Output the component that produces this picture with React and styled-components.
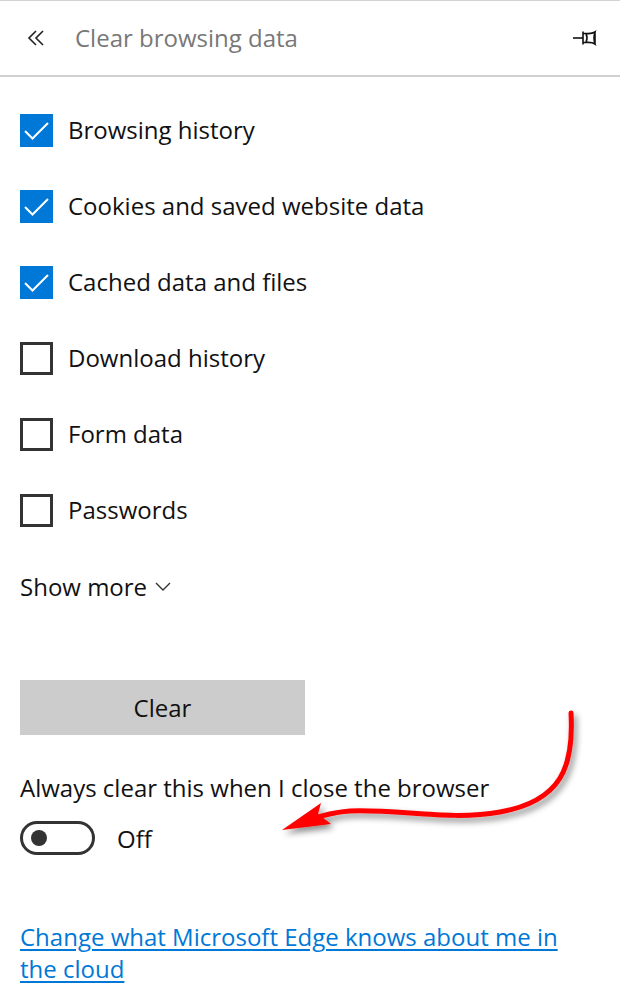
import styled, { createGlobalStyle } from 'styled-components'

const Global = createGlobalStyle`
html, body {
    margin: 0;
    padding: 0;
    background: #fff;
}
body {
    font-family: "Open Sans", "Noto Sans", sans-serif;
    color: #1a1a1a;
}
`

const items = [
    { label: 'Browsing history', on: true },
    { label: 'Cookies and saved website data', on: true },
    { label: 'Cached data and files', on: true },
    { label: 'Download history', on: false },
    { label: 'Form data', on: false },
    { label: 'Passwords', on: false },
]

function App() {
    return (
        <>
            <Global />
            <Page>
                <Header>
                    <Back>
                        <svg width="20" height="16" viewBox="0 0 20 16" fill="none" stroke="#222" strokeWidth="1.6">
                            <path d="M9 1 L2 8 L9 15" />
                            <path d="M16 1 L9 8 L16 15" />
                        </svg>
                    </Back>
                    <Title>Clear browsing data</Title>
                    <Pin>
                        <svg width="29" height="16" viewBox="0 0 29 16" fill="none" stroke="#111" strokeWidth="1.6">
                            <path d="M0 8 H10" />
                            <path d="M10 1.5 V14.5 M10 3.5 H13 Q15 8 13 12.5 H10 M13 3.5 Q19 4 22 2 Q20 8 22 14 Q19 12 13 12.5 M22 1.5 V14.5" />
                        </svg>
                    </Pin>
                </Header>

                <Body>
                    <List>
                        {items.map((it) => (
                            <Row key={it.label}>
                                <Box $on={it.on}>
                                    {it.on && (
                                        <svg width="33" height="33" viewBox="0 0 33 33" fill="none" stroke="#fff" strokeWidth="2">
                                            <path d="M5 17 L12.5 24.5 L28 9" />
                                        </svg>
                                    )}
                                </Box>
                                <Label>{it.label}</Label>
                            </Row>
                        ))}
                    </List>

                    <More>
                        Show more
                        <svg width="16" height="10" viewBox="0 0 16 10" fill="none" stroke="#333" strokeWidth="1.4">
                            <path d="M1 2 L8 9 L15 2" />
                        </svg>
                    </More>

                    <ClearButton>Clear</ClearButton>

                    <Always>Always clear this when I close the browser</Always>
                    <ToggleRow>
                        <Toggle>
                            <Knob />
                        </Toggle>
                        <Off>Off</Off>
                    </ToggleRow>

                    <CloudLink href="#">Change what Microsoft Edge knows about me in the cloud</CloudLink>
                </Body>

                <Arrow width="620" height="1008" viewBox="0 0 620 1008">
                    <defs>
                        <filter id="sh" x="-20%" y="-20%" width="140%" height="140%">
                            <feDropShadow dx="3" dy="4" stdDeviation="3" floodColor="#000" floodOpacity="0.45" />
                        </filter>
                    </defs>
                    <g filter="url(#sh)">
                        <path
                            d="M571 712 C574 765 562 800 500 811 C450 820 400 808 350 810 C335 811 326 814 318 816"
                            fill="none"
                            stroke="#f00"
                            strokeWidth="5"
                            strokeLinecap="round"
                        />
                        <path d="M282 829 L321 802 L318 813 L331 823 Z" fill="#f00" />
                    </g>
                </Arrow>
            </Page>
        </>
    )
}

export default App

const Page = styled.div`
position: relative;
width: 620px;
height: 1008px;
overflow: hidden;
border-top: 1px solid #d2d2d2;
box-sizing: border-box;
`
const Header = styled.div`
height: 74px;
display: flex;
align-items: center;
padding: 0 22px 0 27px;
border-bottom: 2px solid #d0d0d0;
`
const Back = styled.div`
width: 48px;
display: flex;
align-items: center;
`
const Title = styled.div`
flex: 1;
font-size: 24px;
color: #787878;
margin-top: -2px;
`
const Pin = styled.div`
display: flex;
align-items: center;
margin-right: -4px;
`
const Body = styled.div`
padding: 0 20px;
`
const List = styled.div`
display: flex;
flex-direction: column;
padding-top: 15px;
`
const Row = styled.div`
height: 76px;
display: flex;
align-items: center;
gap: 15px;
`
const Box = styled.div`
width: 33px;
height: 33px;
box-sizing: border-box;
background: ${(p) => (p.$on ? '#0078d7' : '#fff')};
border: ${(p) => (p.$on ? 'none' : '3px solid #333')};
display: flex;
`
const Label = styled.span`
font-size: 24px;
color: #111;
margin-top: -2px;
`
const More = styled.div`
height: 76px;
display: flex;
align-items: center;
gap: 8px;
font-size: 24px;
color: #111;
`
const ClearButton = styled.button`
display: block;
margin-top: 56px;
width: 285px;
height: 55px;
background: #cccccc;
border: none;
font-family: inherit;
font-size: 24px;
color: #111;
`
const Always = styled.div`
margin-top: 36px;
font-size: 24px;
color: #111;
`
const ToggleRow = styled.div`
margin-top: 17px;
display: flex;
align-items: center;
gap: 22px;
`
const Toggle = styled.div`
width: 75px;
height: 34px;
box-sizing: border-box;
border: 3px solid #333;
border-radius: 17px;
display: flex;
align-items: center;
padding-left: 8px;
`
const Knob = styled.div`
width: 16px;
height: 16px;
border-radius: 50%;
background: #333;
`
const Off = styled.span`
font-size: 24px;
color: #111;
`
const CloudLink = styled.a`
display: block;
margin-top: 66px;
font-size: 24px;
line-height: 32px;
color: #0078d7;
text-decoration: underline;
text-underline-offset: 3px;
`
const Arrow = styled.svg`
position: absolute;
left: 0;
top: 0;
pointer-events: none;
`
